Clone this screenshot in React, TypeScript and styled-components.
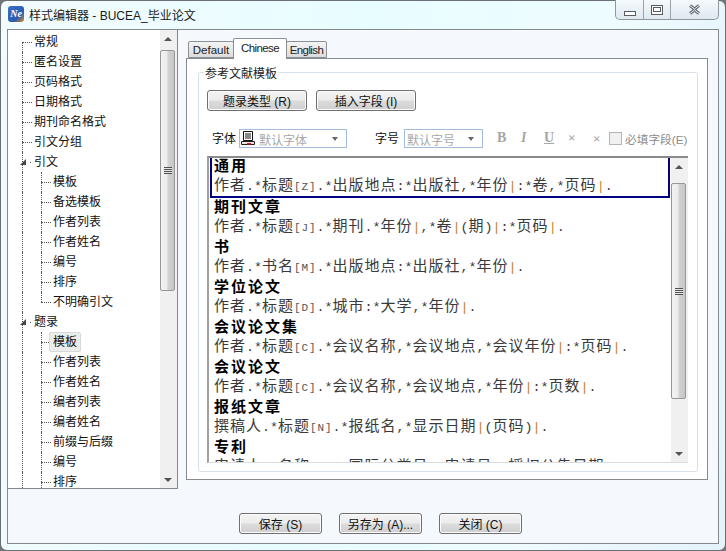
import React from 'react';
import styled, { createGlobalStyle } from 'styled-components';

const cjk = `"Liberation Sans", "Noto Sans CJK SC", sans-serif`;

const GlobalStyle = createGlobalStyle`
  html, body { margin: 0; padding: 0; width: 726px; height: 551px; overflow: hidden; background: #6f7478; }
  * { box-sizing: border-box; }
`;

type TreeItem = { label: string; level: 0 | 1; group?: boolean; selected?: boolean; last?: boolean };

const treeItems: TreeItem[] = [
  { label: '常规', level: 0 },
  { label: '匿名设置', level: 0 },
  { label: '页码格式', level: 0 },
  { label: '日期格式', level: 0 },
  { label: '期刊命名格式', level: 0 },
  { label: '引文分组', level: 0 },
  { label: '引文', level: 0, group: true },
  { label: '模板', level: 1 },
  { label: '备选模板', level: 1 },
  { label: '作者列表', level: 1 },
  { label: '作者姓名', level: 1 },
  { label: '编号', level: 1 },
  { label: '排序', level: 1 },
  { label: '不明确引文', level: 1, last: true },
  { label: '题录', level: 0, group: true },
  { label: '模板', level: 1, selected: true },
  { label: '作者列表', level: 1 },
  { label: '作者姓名', level: 1 },
  { label: '编者列表', level: 1 },
  { label: '编者姓名', level: 1 },
  { label: '前缀与后缀', level: 1 },
  { label: '编号', level: 1 },
  { label: '排序', level: 1 },
];

// each template line: [ text, kind ]
type Part = [string, 'n' | 't' | 'b'];
const templates: { title: string; parts: Part[] }[] = [
  { title: '通用', parts: [['作者.*标题', 'n'], ['[Z]', 't'], ['.*出版地点:*出版社,*年份', 'n'], ['|', 'b'], [':*卷,*页码', 'n'], ['|', 'b'], ['.', 'n']] },
  { title: '期刊文章', parts: [['作者.*标题', 'n'], ['[J]', 't'], ['.*期刊.*年份', 'n'], ['|', 'b'], [',*卷', 'n'], ['|', 'b'], ['(期)', 'n'], ['|', 'b'], [':*页码', 'n'], ['|', 'b'], ['.', 'n']] },
  { title: '书', parts: [['作者.*书名', 'n'], ['[M]', 't'], ['.*出版地点:*出版社,*年份', 'n'], ['|', 'b'], ['.', 'n']] },
  { title: '学位论文', parts: [['作者.*标题', 'n'], ['[D]', 't'], ['.*城市:*大学,*年份', 'n'], ['|', 'b'], ['.', 'n']] },
  { title: '会议论文集', parts: [['作者.*标题', 'n'], ['[C]', 't'], ['.*会议名称,*会议地点,*会议年份', 'n'], ['|', 'b'], [':*页码', 'n'], ['|', 'b'], ['.', 'n']] },
  { title: '会议论文', parts: [['作者.*标题', 'n'], ['[C]', 't'], ['.*会议名称,*会议地点,*年份', 'n'], ['|', 'b'], [':*页数', 'n'], ['|', 'b'], ['.', 'n']] },
  { title: '报纸文章', parts: [['撰稿人.*标题', 'n'], ['[N]', 't'], ['.*报纸名,*显示日期', 'n'], ['|', 'b'], ['(页码)', 'n'], ['|', 'b'], ['.', 'n']] },
  { title: '专利', parts: [['申请人.*名称', 'n'], ['[P]', 't'], ['.*国际分类号,*申请号,*授权公告日期:', 'n']] },
];

// latin signs are half width in the template text
const splitRuns = (text: string) => text.match(/[\x00-\x7f]+|[^\x00-\x7f]+/g) ?? [];

export default function App() {
  return (
    <>
      <GlobalStyle />
      <Win>
        <TitleBar>
          <AppIcon>Ne</AppIcon>
          <TitleText>样式编辑器 - BUCEA_毕业论文</TitleText>
          <Controls>
            <Ctrl $w={28}>
              <svg width="12" height="5" viewBox="0 0 12 5" style={{ marginTop: 7 }}>
                <rect x="0.5" y="0.5" width="11" height="4" fill="#fff" stroke="#565c62" />
              </svg>
            </Ctrl>
            <Ctrl $w={27}>
              <svg width="12" height="10" viewBox="0 0 12 10">
                <rect x="0.5" y="0.5" width="11" height="9" fill="#fff" stroke="#565c62" />
                <rect x="2.5" y="2.5" width="7" height="4" fill="none" stroke="#565c62" />
              </svg>
            </Ctrl>
            <Ctrl $w={47} $last>
              <svg width="13" height="11" viewBox="0 0 13 11">
                <path d="M2 1.5l4.5 3.5L11 1.5M2 9.5L6.5 6l4.5 3.5" fill="none" stroke="#616971" strokeWidth="3" />
                <path d="M2 1.5l4.5 3.5L11 1.5M2 9.5L6.5 6l4.5 3.5" fill="none" stroke="#f4f7f9" strokeWidth="1" />
              </svg>
            </Ctrl>
          </Controls>
        </TitleBar>
        <Client>
          <Main>
            <Tree>
              <TreeList>
                {treeItems.map((item, i) => (
                  <TreeRow key={i} $level={item.level} $first={i === 0} $last={item.last}>
                    <Elbow $level={item.level} $group={item.group} />
                    {item.group && <Arrow />}
                    <TreeLabel $selected={item.selected}>{item.label}</TreeLabel>
                  </TreeRow>
                ))}
              </TreeList>
              <ScrollBar>
                <ScrollBtn>
                  <UpGlyph />
                </ScrollBtn>
                <TreeThumb>
                  <Grip />
                </TreeThumb>
                <ScrollFill />
                <ScrollBtn>
                  <DownGlyph />
                </ScrollBtn>
              </ScrollBar>
            </Tree>
            <TabArea>
              <TabStrip>
                <Tab $w={46}>Default</Tab>
                <Tab $w={54} $active $tight>Chinese</Tab>
                <Tab $w={41} $tight>English</Tab>
              </TabStrip>
              <TabPane>
                <Group>
                  <Legend>参考文献模板</Legend>
                  <ButtonRow>
                    <PushButton $w={100}>题录类型 (R)</PushButton>
                    <PushButton $w={100}>插入字段 (I)</PushButton>
                  </ButtonRow>
                  <FormatRow>
                    <FieldLabel>字体</FieldLabel>
                    <Select $w={108}>
                      <svg width="14" height="15" viewBox="0 0 14 15">
                        <path d="M2.5 0.5h9v9h-9zM4 3h6M4 5h6M4 7h6" fill="none" stroke="#111" />
                        <path d="M0.5 10.5h13v3h-13z" fill="#e8e8e8" stroke="#222" />
                        <path d="M6 12h4v1.5H6z" fill="#e02020" />
                      </svg>
                      <SelectText>默认字体</SelectText>
                      <Caret />
                    </Select>
                    <FieldLabel $ml={28}>字号</FieldLabel>
                    <Select $w={79} $ml={2}>
                      <SelectText>默认字号</SelectText>
                      <Caret />
                    </Select>
                    <FormatIcons>
                      <FmtGlyph $w={24} $bold>B</FmtGlyph>
                      <FmtGlyph $w={23} $italic>I</FmtGlyph>
                      <FmtGlyph $w={24} $under>U</FmtGlyph>
                      <FmtGlyph $w={25} $small>×</FmtGlyph>
                      <FmtGlyph $w={16} $small $low>×</FmtGlyph>
                    </FormatIcons>
                    <CheckBox />
                    <CheckLabel>必填字段(E)</CheckLabel>
                  </FormatRow>
                  <Editor>
                    <EditorBody>
                      {templates.map((t, i) => (
                        <Entry key={i} $active={i === 0}>
                          <EntryTitle>{t.title}</EntryTitle>
                          <EntryLine>
                            {t.parts.map((p, j) =>
                              p[1] === 't' ? (
                                <TypeTag key={j}>{p[0]}</TypeTag>
                              ) : p[1] === 'b' ? (
                                <BarMark key={j}>{p[0]}</BarMark>
                              ) : (
                                splitRuns(p[0]).map((run, k) =>
                                  run.charCodeAt(0) < 128 ? <AsciiRun key={`${j}-${k}`}>{run}</AsciiRun> : <span key={`${j}-${k}`}>{run}</span>,
                                )
                              ),
                            )}
                          </EntryLine>
                        </Entry>
                      ))}
                    </EditorBody>
                    <ScrollBar>
                      <ScrollBtn>
                        <UpGlyph />
                      </ScrollBtn>
                      <EditorThumb>
                        <Grip />
                      </EditorThumb>
                      <ScrollFill />
                      <ScrollBtn>
                        <DownGlyph />
                      </ScrollBtn>
                    </ScrollBar>
                  </Editor>
                </Group>
              </TabPane>
            </TabArea>
          </Main>
          <Footer>
            <PushButton $w={83}>保存 (S)</PushButton>
            <PushButton $w={83}>另存为 (A)...</PushButton>
            <PushButton $w={83}>关闭 (C)</PushButton>
          </Footer>
        </Client>
      </Win>
    </>
  );
}

const Win = styled.div`
  width: 726px;
  height: 551px;
  display: flex;
  flex-direction: column;
  padding: 0 6px 6px;
  border: 1px solid #6b7076;
  border-radius: 7px;
  background: linear-gradient(100deg, #f2fbfe 0%, #e8fdff 45%, #eefcff 75%, #e4f2fa 100%);
  font-family: ${cjk};
  color: #111;
`;

const TitleBar = styled.div`
  height: 28px;
  flex: none;
  display: flex;
  align-items: center;
  padding-bottom: 2px;
`;

const AppIcon = styled.div`
  width: 16px;
  height: 16px;
  margin-left: 1px;
  border-radius: 3px;
  background: linear-gradient(135deg, #3d6fc4 0%, #2a5cb0 65%, #e08a2a 100%);
  color: #fff;
  font: italic bold 10px/16px "Liberation Serif", serif;
  text-align: center;
`;

const TitleText = styled.div`
  margin-left: 5px;
  font-size: 12px;
  color: #1a1a1a;
`;

const Controls = styled.div`
  margin-left: auto;
  align-self: flex-start;
  margin-top: -1px;
  height: 20px;
  display: flex;
  border: 1px solid #8f979e;
  border-top: none;
  border-radius: 0 0 5px 5px;
  background: linear-gradient(#f4fafd, #dfe9f0);
`;

const Ctrl = styled.div<{ $w: number; $last?: boolean }>`
  width: ${(p) => p.$w}px;
  display: flex;
  align-items: center;
  justify-content: center;
  border-right: ${(p) => (p.$last ? 'none' : '1px solid #9aa2a8')};
`;

const Client = styled.div`
  flex: 1;
  min-height: 0;
  display: flex;
  flex-direction: column;
  border: 1px solid #858a8f;
  background: #f5f9fe;
`;

const Main = styled.div`
  height: 459px;
  display: flex;
  flex: none;
`;

const Tree = styled.div`
  width: 170px;
  display: flex;
  border-right: 1px solid #858a8f;
  border-bottom: 1px solid #858a8f;
  background: #fff;
`;

const TreeList = styled.div`
  flex: 1;
  min-width: 0;
  overflow: hidden;
  padding-top: 2px;
`;

const TreeRow = styled.div<{ $level: 0 | 1; $first?: boolean; $last?: boolean }>`
  position: relative;
  height: 20px;
  display: flex;
  align-items: center;
  padding-left: ${(p) => (p.$level ? 45 : 26)}px;
  &::before {
    content: '';
    position: absolute;
    left: 14px;
    top: ${(p) => (p.$first ? 10 : 0)}px;
    bottom: 0;
    border-left: 1px dotted #555;
  }
  &::after {
    content: '';
    position: absolute;
    left: 33px;
    top: 0;
    height: ${(p) => (p.$last ? 10 : 20)}px;
    border-left: 1px dotted #555;
    display: ${(p) => (p.$level ? 'block' : 'none')};
  }
`;

const Elbow = styled.span<{ $level: 0 | 1; $group?: boolean }>`
  position: absolute;
  left: ${(p) => (p.$group ? 22 : p.$level ? 33 : 14)}px;
  top: 10px;
  width: ${(p) => (p.$group ? 1 : 10)}px;
  border-top: 1px dotted #555;
`;

const Arrow = styled.span`
  position: absolute;
  left: 12px;
  top: 7px;
  width: 0;
  height: 0;
  border-left: 6px solid transparent;
  border-bottom: 6px solid #444;
  z-index: 1;
`;

const TreeLabel = styled.span<{ $selected?: boolean }>`
  position: relative;
  z-index: 1;
  font-size: 12px;
  line-height: 18px;
  color: #111;
  ${(p) =>
    p.$selected
      ? `margin-left: -4px; padding: 0 3px; background: #ececec; border: 1px solid #d9d9d9; border-radius: 2px;`
      : ``}
`;

const ScrollBar = styled.div`
  width: 17px;
  flex: none;
  display: flex;
  flex-direction: column;
  background: #f0f0f0;
`;

const ScrollBtn = styled.div`
  width: 15px;
  height: 17px;
  flex: none;
  display: flex;
  align-items: center;
  justify-content: center;
`;

const UpGlyph = styled.span`
  width: 0;
  height: 0;
  border-left: 4px solid transparent;
  border-right: 4px solid transparent;
  border-bottom: 4px solid #555;
`;

const DownGlyph = styled.span`
  width: 0;
  height: 0;
  border-left: 4px solid transparent;
  border-right: 4px solid transparent;
  border-top: 4px solid #555;
`;

const Thumb = styled.div`
  width: 15px;
  flex: none;
  display: flex;
  align-items: center;
  justify-content: center;
  border: 1px solid #979797;
  border-radius: 2px;
  background: linear-gradient(90deg, #f2f2f2 0%, #ececec 45%, #d2d2d2 55%, #c6c6c6 100%);
`;

const TreeThumb = styled(Thumb)`
  height: 241px;
  margin-top: 3px;
`;

const EditorThumb = styled(Thumb)`
  height: 216px;
  margin-top: 8px;
`;

const Grip = styled.span`
  width: 8px;
  height: 7px;
  background: repeating-linear-gradient(#4f4f4f 0 1px, #e8e8e8 1px 2px);
`;

const ScrollFill = styled.div`
  flex: 1;
`;

const TabArea = styled.div`
  flex: 1;
  min-width: 0;
  display: flex;
  flex-direction: column;
  padding: 7px 10px 0 8px;
`;

const TabStrip = styled.div`
  height: 21px;
  flex: none;
  display: flex;
  align-items: flex-end;
  padding-left: 2px;
  position: relative;
  z-index: 1;
`;

const Tab = styled.div<{ $w: number; $active?: boolean; $tight?: boolean }>`
  width: ${(p) => p.$w}px;
  height: ${(p) => (p.$active ? 21 : 17)}px;
  margin-bottom: ${(p) => (p.$active ? -1 : 0)}px;
  margin-right: -1px;
  display: flex;
  align-items: center;
  justify-content: center;
  padding-bottom: ${(p) => (p.$active ? 3 : 0)}px;
  border: 1px solid #8b9097;
  border-bottom: ${(p) => (p.$active ? 'none' : '1px solid #8b9097')};
  border-radius: 2px 2px 0 0;
  background: ${(p) => (p.$active ? '#fff' : 'linear-gradient(#f4f4f4, #dcdcdc)')};
  z-index: ${(p) => (p.$active ? 2 : 0)};
  font-size: 11.5px;
  letter-spacing: ${(p) => (p.$tight ? -0.6 : 0)}px;
  color: #222;
`;

const TabPane = styled.div`
  height: 422px;
  flex: none;
  padding: 13px 9px 7px 11px;
  border: 1px solid #858a8f;
  background: #fff;
`;

const Group = styled.div`
  position: relative;
  height: 400px;
  padding: 17px 9px 0 8px;
  border: 1px solid #d9e1e8;
  border-radius: 3px;
`;

const Legend = styled.div`
  position: absolute;
  left: 5px;
  top: -6px;
  padding: 0 1px;
  background: #fff;
  font-size: 12px;
  line-height: 14px;
  color: #222;
`;

const ButtonRow = styled.div`
  height: 21px;
  display: flex;
  gap: 9px;
`;

const PushButton = styled.div<{ $w: number }>`
  width: ${(p) => p.$w}px;
  height: 21px;
  display: flex;
  align-items: center;
  justify-content: center;
  padding-bottom: 1px;
  border: 1px solid #707070;
  border-radius: 3px;
  background: linear-gradient(#f3f3f3 0%, #ececec 48%, #dcdcdc 52%, #cfcfcf 100%);
  box-shadow: inset 0 0 0 1px #fbfbfb;
  font-size: 12px;
  color: #111;
`;

const FormatRow = styled.div`
  height: 19px;
  margin-top: 18px;
  display: flex;
  align-items: center;
  padding-left: 5px;
`;

const FieldLabel = styled.span<{ $ml?: number }>`
  width: 27px;
  margin-left: ${(p) => p.$ml ?? 0}px;
  padding-bottom: 2px;
  font-size: 12px;
  color: #111;
`;

const Select = styled.div<{ $w: number; $ml?: number }>`
  width: ${(p) => p.$w}px;
  height: 19px;
  margin-left: ${(p) => p.$ml ?? 0}px;
  display: flex;
  align-items: center;
  gap: 3px;
  padding: 0 8px 0 1px;
  border: 1px solid #a3bcdc;
  background: #fff;
`;

const SelectText = styled.span`
  padding: 1px 0 0 1px;
  font-size: 12px;
  color: #a8a8a8;
`;

const Caret = styled.span`
  margin-left: auto;
  width: 0;
  height: 0;
  border-left: 3.5px solid transparent;
  border-right: 3.5px solid transparent;
  border-top: 4px solid #666;
`;

const FormatIcons = styled.div`
  margin-left: 14px;
  display: flex;
  align-items: center;
  height: 19px;
  margin-top: -2px;
`;

const FmtGlyph = styled.span<{ $w: number; $bold?: boolean; $italic?: boolean; $under?: boolean; $small?: boolean; $low?: boolean }>`
  width: ${(p) => p.$w}px;
  padding-top: ${(p) => (p.$low ? 2 : 0)}px;
  font-family: "Liberation Serif", serif;
  font-size: ${(p) => (p.$small ? 13 : 14)}px;
  font-weight: 700;
  font-style: ${(p) => (p.$italic ? 'italic' : 'normal')};
  text-decoration: ${(p) => (p.$under ? 'underline' : 'none')};
  color: #a6a6a6;
`;

const CheckBox = styled.span`
  width: 13px;
  height: 13px;
  border: 1px solid #b4b4b4;
  background: #f1f1f1;
`;

const CheckLabel = styled.span`
  margin-left: 3px;
  font-size: 11.7px;
  white-space: nowrap;
  color: #8d8d8d;
`;

const Editor = styled.div`
  width: 481px;
  height: 307px;
  margin-top: 8px;
  display: flex;
  border-top: 2px solid #8a8a8a;
  border-left: 2px solid #a0a0a0;
  border-bottom: 1px solid #dcdcdc;
  background: #fff;
`;

const EditorBody = styled.div`
  flex: 1;
  min-width: 0;
  overflow: hidden;
  padding: 0 1px;
`;

const Entry = styled.div<{ $active?: boolean }>`
  height: ${(p) => (p.$active ? 41 : 40)}px;
  margin-top: ${(p) => (p.$active ? -1 : 0)}px;
  padding-left: ${(p) => (p.$active ? 2 : 4)}px;
  border: ${(p) => (p.$active ? '2px solid #000080' : 'none')};
  border-top: none;
`;

const EntryTitle = styled.div`
  height: 17px;
  font-family: "Noto Sans CJK SC", sans-serif;
  font-weight: 700;
  font-size: 15px;
  line-height: 16px;
  letter-spacing: 2px;
  color: #000;
`;

const EntryLine = styled.div`
  height: 20px;
  font-family: "Noto Sans CJK SC", sans-serif;
  font-size: 15px;
  line-height: 20px;
  letter-spacing: 1px;
  white-space: nowrap;
  color: #3a3a3a;
`;

const AsciiRun = styled.span`
  font-family: "Liberation Mono", monospace;
  font-size: 13.33px;
  letter-spacing: 0;
`;

const TypeTag = styled.span`
  font-family: "Liberation Mono", monospace;
  font-size: 11px;
  letter-spacing: 0.9px;
  color: #555;
`;

const BarMark = styled.span`
  font-family: "Liberation Mono", monospace;
  font-size: 13.33px;
  letter-spacing: 0;
  color: #c77f2a;
`;

const Footer = styled.div`
  flex: 1;
  display: flex;
  align-items: flex-start;
  gap: 17px;
  padding: 24px 0 0 231px;
`;
